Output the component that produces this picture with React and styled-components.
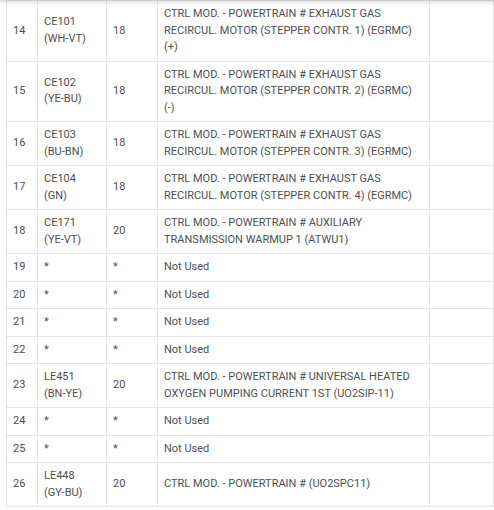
import React from "react";
import styled, { createGlobalStyle } from "styled-components";

const GlobalStyle = createGlobalStyle`
  html, body {
    margin: 0;
    padding: 0;
    background: #fff;
  }
  body {
    font-family: Roboto, "Liberation Sans", sans-serif;
    font-size: 11px;
    color: #4f4f4f;
  }
`;

const rows = [
  { pin: 14, circuit: ["CE101", "(WH-VT)"], gauge: "18", desc: ["CTRL MOD. - POWERTRAIN # EXHAUST GAS", "RECIRCUL. MOTOR (STEPPER CONTR. 1) (EGRMC)", "(+)"] },
  { pin: 15, circuit: ["CE102", "(YE-BU)"], gauge: "18", desc: ["CTRL MOD. - POWERTRAIN # EXHAUST GAS", "RECIRCUL. MOTOR (STEPPER CONTR. 2) (EGRMC)", "(-)"] },
  { pin: 16, circuit: ["CE103", "(BU-BN)"], gauge: "18", desc: ["CTRL MOD. - POWERTRAIN # EXHAUST GAS", "RECIRCUL. MOTOR (STEPPER CONTR. 3) (EGRMC)"] },
  { pin: 17, circuit: ["CE104", "(GN)"], gauge: "18", desc: ["CTRL MOD. - POWERTRAIN # EXHAUST GAS", "RECIRCUL. MOTOR (STEPPER CONTR. 4) (EGRMC)"] },
  { pin: 18, circuit: ["CE171", "(YE-VT)"], gauge: "20", desc: ["CTRL MOD. - POWERTRAIN # AUXILIARY", "TRANSMISSION WARMUP 1 (ATWU1)"] },
  { pin: 19, circuit: ["*"], gauge: "*", desc: ["Not Used"] },
  { pin: 20, circuit: ["*"], gauge: "*", desc: ["Not Used"] },
  { pin: 21, circuit: ["*"], gauge: "*", desc: ["Not Used"] },
  { pin: 22, circuit: ["*"], gauge: "*", desc: ["Not Used"] },
  { pin: 23, circuit: ["LE451", "(BN-YE)"], gauge: "20", desc: ["CTRL MOD. - POWERTRAIN # UNIVERSAL HEATED", "OXYGEN PUMPING CURRENT 1ST (UO2SIP-11)"] },
  { pin: 24, circuit: ["*"], gauge: "*", desc: ["Not Used"] },
  { pin: 25, circuit: ["*"], gauge: "*", desc: ["Not Used"] },
  { pin: 26, circuit: ["LE448", "(GY-BU)"], gauge: "20", desc: ["CTRL MOD. - POWERTRAIN # (UO2SPC11)"] },
];

const App = () => {
  return (
    <Wrapper>
      <GlobalStyle />
      <TopShadow />
      <Table>
        <colgroup>
          <col style={{ width: 31 }} />
          <col style={{ width: 69 }} />
          <col style={{ width: 51 }} />
          <col style={{ width: 272 }} />
          <col style={{ width: 64 }} />
        </colgroup>
        <tbody>
          {rows.map((row) => (
            <tr key={row.pin}>
              <Cell>{row.pin}</Cell>
              <Cell>
                {row.circuit.map((line, i) => (
                  <Line key={i}>{line}</Line>
                ))}
              </Cell>
              <Cell>{row.gauge}</Cell>
              <Cell>
                {row.desc.map((line, i) => (
                  <Line key={i}>{line}</Line>
                ))}
              </Cell>
              <Cell />
            </tr>
          ))}
        </tbody>
      </Table>
    </Wrapper>
  );
};

const Wrapper = styled.div`
  padding-left: 6px;
`;

const TopShadow = styled.div`
  position: fixed;
  top: 0;
  left: 0;
  right: 0;
  height: 7px;
  background: linear-gradient(
    to bottom,
    rgba(0, 0, 0, 0.12),
    rgba(0, 0, 0, 0.04) 50%,
    rgba(0, 0, 0, 0)
  );
  z-index: 2;
`;

const Table = styled.table`
  width: 488px;
  table-layout: fixed;
  border-collapse: collapse;
`;

const Cell = styled.td`
  border: 1px solid #e4e4e4;
  padding: 5px 6px;
  line-height: 16.5px;
  vertical-align: middle;
  text-align: left;
  white-space: nowrap;
`;

const Line = styled.span`
  display: block;
`;

export default App;
